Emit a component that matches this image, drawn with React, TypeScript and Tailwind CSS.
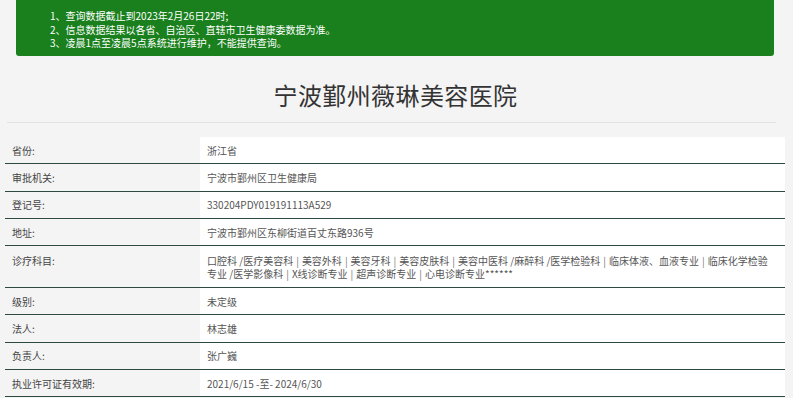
import React from 'react';

type Row = { label: string; value: string | string[][]; multi?: boolean };

const rows: Row[] = [
  { label: '省份:', value: '浙江省' },
  { label: '审批机关:', value: '宁波市鄞州区卫生健康局' },
  { label: '登记号:', value: '330204PDY019191113A529' },
  { label: '地址:', value: '宁波市鄞州区东柳街道百丈东路936号' },
  {
    label: '诊疗科目:',
    value: [
      ['口腔科 /医疗美容科', '美容外科', '美容牙科', '美容皮肤科', '美容中医科 /麻醉科 /医学检验科', '临床体液、血液专业', '临床化学检验'],
      ['专业 /医学影像科', 'X线诊断专业', '超声诊断专业', '心电诊断专业******'],
    ],
    multi: true,
  },
  { label: '级别:', value: '未定级' },
  { label: '法人:', value: '林志雄' },
  { label: '负责人:', value: '张广巍' },
  { label: '执业许可证有效期:', value: '2021/6/15 -至- 2024/6/30' },
];

function Subjects({ lines }: { lines: string[][] }) {
  return (
    <>
      {lines.map((line, i) => (
        <div key={i} className="whitespace-nowrap h-[13px] leading-[13px]">
          {line.map((seg, j) => (
            <React.Fragment key={j}>
              {j > 0 && <span className="inline-block mx-[3px] text-[#777]">|</span>}
              <span>{seg}</span>
            </React.Fragment>
          ))}
        </div>
      ))}
    </>
  );
}

export default function App() {
  return (
    <div className="min-h-screen bg-[#f4f4f4] font-['Noto_Sans_CJK_SC','Noto_Sans',sans-serif]">
      {/* notice */}
      <div className="ml-[16px] w-[758px] h-[56px] bg-[#1a801e] rounded-b-[3px] pl-[34px] pt-[9px] text-white text-[10px] leading-[13.5px]">
        <p>1、查询数据截止到2023年2月26日22时;</p>
        <p>2、信息数据结果以各省、自治区、直辖市卫生健康委数据为准。</p>
        <p>3、凌晨1点至凌晨5点系统进行维护，不能提供查询。</p>
      </div>

      {/* title */}
      <div className="mx-[7px] w-[769px] border-b border-[#e2e2e2] pt-[24px] pb-[12px] pl-[8px] text-center">
        <h1 className="text-[24px] leading-[30px] text-[#333] tracking-[0.4px]">宁波鄞州薇琳美容医院</h1>
      </div>

      {/* table */}
      <div className="ml-[5px] w-[780px] mt-[14px] text-[10px]">
        {rows.map((r) => (
          <div
            key={r.label}
            className={
              r.multi
                ? 'grid grid-cols-[195px_1fr] border-b border-[#2e4a3f] min-h-[41px]'
                : 'grid grid-cols-[195px_1fr] border-b border-[#2e4a3f] h-[27.3px]'
            }
          >
            <div
              className={
                r.multi
                  ? 'pl-[7px] pt-[8px] text-[#444] leading-[13px]'
                  : 'pl-[7px] flex items-center text-[#444]'
              }
            >
              {r.label}
            </div>
            <div
              className={
                r.multi
                  ? 'bg-white pl-[7px] pt-[8px] pb-[7px] text-[#555] leading-[13px]'
                  : 'bg-white pl-[7px] flex items-center text-[#555]'
              }
            >
              {typeof r.value === 'string' ? r.value : <Subjects lines={r.value} />}
            </div>
          </div>
        ))}
      </div>
    </div>
  );
}
